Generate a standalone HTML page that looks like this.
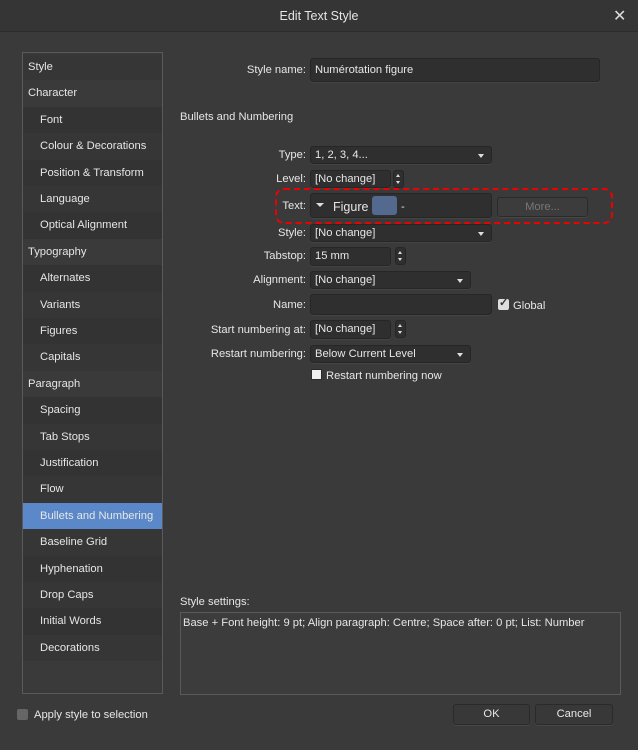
<!DOCTYPE html>
<html><head><style>
body{margin:0;width:638px;height:750px;background:#3a3a3a;font-family:"Liberation Sans",sans-serif;font-size:11.2px;color:#e6e6e6;position:relative;overflow:hidden}
.a{position:absolute}
.title{left:0;top:0;width:638px;height:31px;background:#353535;border-bottom:1px solid #2c2c2c;text-align:center;line-height:33px;font-size:12.5px}
.side{left:22px;top:52px;width:139px;height:640px;border:1px solid #5a5a5a;background:#3a3a3a}
.it{position:absolute;left:0;width:139px;height:26.4px;line-height:26px;padding-left:5px;box-sizing:border-box;white-space:nowrap}
.it.s{padding-left:17px}
.lab{text-align:right;width:130px;line-height:18px}
.in{background:#2f2f2f;border:1px solid #262626;border-radius:3px;box-sizing:border-box;line-height:16px;padding-left:4px;box-shadow:0 1px 0 #444}
.dd:after{content:"";position:absolute;right:7px;top:7px;border:3.5px solid transparent;border-top:4px solid #ddd}
.spin{width:11px;height:18px;background:#2f2f2f;border:1px solid #262626;border-radius:3px;box-sizing:border-box}
.spin:before{content:"";position:absolute;left:2px;top:3px;border:2.5px solid transparent;border-bottom:3px solid #ddd;border-top:0}
.spin:after{content:"";position:absolute;left:2px;top:10px;border:2.5px solid transparent;border-top:3px solid #ddd;border-bottom:0}
.btn{background:#383838;border:1px solid #2a2a2a;border-radius:3px;box-sizing:border-box;text-align:center;line-height:18px;box-shadow:0 1px 0 #474747}
.cb{width:11px;height:11px;background:#ddd;border-radius:2px}
</style></head><body>
<div class="a title">Edit Text Style</div>
<div class="a" style="left:613px;top:6px;font-size:16px;color:#ddd">✕</div>
<div class="a side">
<div class="it" style="top:1px;background:#363636">Style</div>
<div class="it" style="top:27.4px;background:#3a3a3a">Character</div>
<div class="it s" style="top:53.8px;background:#333">Font</div>
<div class="it s" style="top:80.2px;background:#363636">Colour &amp; Decorations</div>
<div class="it s" style="top:106.6px;background:#333">Position &amp; Transform</div>
<div class="it s" style="top:133px;background:#363636">Language</div>
<div class="it s" style="top:159.4px;background:#333">Optical Alignment</div>
<div class="it" style="top:185.8px;background:#3a3a3a">Typography</div>
<div class="it s" style="top:212.2px;background:#333">Alternates</div>
<div class="it s" style="top:238.6px;background:#363636">Variants</div>
<div class="it s" style="top:265px;background:#333">Figures</div>
<div class="it s" style="top:291.4px;background:#363636">Capitals</div>
<div class="it" style="top:317.8px;background:#3a3a3a">Paragraph</div>
<div class="it s" style="top:344.2px;background:#333">Spacing</div>
<div class="it s" style="top:370.6px;background:#363636">Tab Stops</div>
<div class="it s" style="top:397px;background:#333">Justification</div>
<div class="it s" style="top:423.4px;background:#363636">Flow</div>
<div class="it s" style="top:449.8px;background:#5b88c8">Bullets and Numbering</div>
<div class="it s" style="top:476.2px;background:#363636">Baseline Grid</div>
<div class="it s" style="top:502.6px;background:#333">Hyphenation</div>
<div class="it s" style="top:529px;background:#363636">Drop Caps</div>
<div class="it s" style="top:555.4px;background:#333">Initial Words</div>
<div class="it s" style="top:581.8px;background:#363636">Decorations</div>
</div>

<div class="a lab" style="left:176px;top:61px">Style name:</div>
<div class="a in" style="left:310px;top:58px;width:290px;height:24px;line-height:22px">Numérotation figure</div>
<div class="a" style="left:180px;top:111px">Bullets and Numbering</div>

<div class="a lab" style="left:176px;top:146px">Type:</div>
<div class="a in dd" style="left:310px;top:146px;width:182px;height:18px">1, 2, 3, 4...</div>
<div class="a lab" style="left:176px;top:170px">Level:</div>
<div class="a in" style="left:310px;top:170px;width:81px;height:18px">[No change]</div>
<div class="a spin" style="left:393px;top:170px"></div>

<div class="a" style="left:275px;top:188px;width:334px;height:32px;border:2px dashed #e00;border-radius:9px"></div>
<div class="a lab" style="left:176px;top:197px">Text:</div>
<div class="a in" style="left:310px;top:193px;width:182px;height:25px"></div>
<div class="a" style="left:316px;top:203px;border:4px solid transparent;border-top:4px solid #ddd"></div>
<div class="a" style="left:333px;top:199px;line-height:16px;font-size:12.5px">Figure</div>
<div class="a" style="left:372px;top:196px;width:25px;height:19px;background:#53698e;border-radius:3px"></div>
<div class="a" style="left:401px;top:199px;line-height:16px">-</div>
<div class="a btn" style="left:497px;top:197px;width:91px;height:20px;color:#777;background:#3c3c3c">More...</div>

<div class="a lab" style="left:176px;top:224px">Style:</div>
<div class="a in dd" style="left:310px;top:224px;width:182px;height:18px">[No change]</div>
<div class="a lab" style="left:176px;top:247px">Tabstop:</div>
<div class="a in" style="left:310px;top:247px;width:81px;height:19px">15 mm</div>
<div class="a spin" style="left:395px;top:247px"></div>
<div class="a lab" style="left:176px;top:271px">Alignment:</div>
<div class="a in dd" style="left:310px;top:271px;width:161px;height:18px">[No change]</div>
<div class="a lab" style="left:176px;top:296px">Name:</div>
<div class="a in" style="left:310px;top:294px;width:182px;height:21px"></div>
<div class="a cb" style="left:498px;top:299px"></div>
<div class="a" style="left:499px;top:296px;color:#333;font-size:11px;font-weight:bold">✓</div>
<div class="a" style="left:513px;top:297px;line-height:18px">Global</div>
<div class="a lab" style="left:176px;top:321px">Start numbering at:</div>
<div class="a in" style="left:310px;top:320px;width:81px;height:19px">[No change]</div>
<div class="a spin" style="left:395px;top:320px"></div>
<div class="a lab" style="left:176px;top:345px">Restart numbering:</div>
<div class="a in dd" style="left:310px;top:345px;width:161px;height:18px">Below Current Level</div>
<div class="a" style="left:311px;top:369px;width:9px;height:9px;background:#eee;border-radius:1px;border:1px solid #2a2a2a"></div>
<div class="a" style="left:326px;top:367px;line-height:18px">Restart numbering now</div>

<div class="a" style="left:180px;top:596px">Style settings:</div>
<div class="a" style="left:180px;top:612px;width:441px;height:83px;border:1px solid #5a5a5a;box-sizing:border-box;background:#3c3c3c;padding:2px 2px;line-height:16px">Base + Font height: 9 pt; Align paragraph: Centre; Space after: 0 pt; List: Number</div>

<div class="a" style="left:17px;top:709px;width:11px;height:11px;background:#666;border-radius:2px"></div>
<div class="a" style="left:34px;top:707px;line-height:16px">Apply style to selection</div>
<div class="a btn" style="left:453px;top:704px;width:77px;height:21px">OK</div>
<div class="a btn" style="left:535px;top:704px;width:78px;height:21px">Cancel</div>
</body></html>
